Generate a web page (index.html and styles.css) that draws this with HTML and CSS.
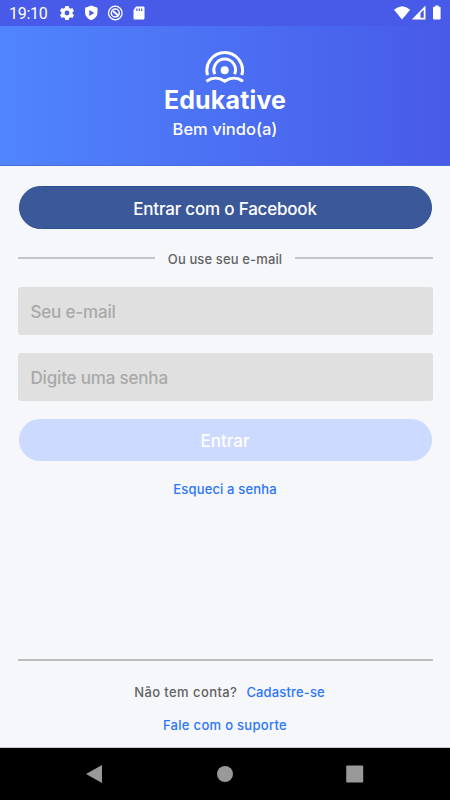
FILE: index.html
```html
<!DOCTYPE html>
<html lang="pt-BR">
<head>
<meta charset="utf-8">
<title>Edukative</title>
<link rel="stylesheet" href="styles.css">
</head>
<body>
<div class="screen">
  <div class="status">
    <span class="clock">19:10</span>
    <svg class="status-left" width="92" height="18" viewBox="0 0 92 18">
      <g fill="#fff">
        <path fill-rule="evenodd" d="M6.3 2h3.4l.5 2 1.2.7 2-.6 1.6 2.8-1.5 1.4v1.4l1.5 1.4-1.6 2.8-2-.6-1.2.7-.5 2H6.3l-.5-2-1.2-.7-2 .6L1 11.100l1.5-1.400V8.300L1 6.900l1.600-2.800 2 .6L5.800 4zM8 6.600a2.400 2.400 0 1 0 0 4.800 2.400 2.400 0 0 0 0-4.800z"/>
        <path fill-rule="evenodd" d="M32.300 1.500l6.200 2.300v4.700c0 3.400-2.300 6.300-6.200 7.700-3.900-1.400-6.200-4.300-6.200-7.700V3.800zM30.300 5.900v6l5-3z"/>
        <path fill-rule="evenodd" d="M79.500 2.500h7.300q1.200 0 1.200 1.200v10.600q0 1.200-1.200 1.200h-8.600q-1.200 0-1.200-1.200V6.300zM79.800 4.500v2.500h1.200V4.500zM82.200 4.500v2.500h1.200V4.500zM84.600 4.500v2.500h1.200V4.500z" transform="translate(-2.500 0)"/>
      </g>
      <g fill="none" stroke="#fff">
        <circle cx="56.300" cy="9" r="6.800" stroke-width="1.300"/>
        <circle cx="56.300" cy="9" r="4" stroke-width="1.500"/>
        <path d="M54 7l5.700 5" stroke-width="1.800"/>
      </g>
    </svg>
    <svg class="status-right" width="50" height="18" viewBox="0 0 50 18">
      <path fill="#fff" d="M0 5.800Q8 -1.200 16.200 5.800L8 15.400z"/>
      <path fill="#fff" fill-rule="evenodd" d="M31.500 1.600v13.800H17.800zM29.700 5.800l-3.200 3.300v4.700h3.200z"/>
      <path fill="#fff" d="M41.200 2.800V1.500h3.400v1.300h1.100q.9 0 .9.900v10.800q0 .900-.900.900h-5.800q-.900 0-.900-.900V3.700q0-.900.900-.9z"/>
    </svg>
  </div>
  <header class="hero">
    <svg class="logo" width="40" height="34" viewBox="0 0 40 34">
      <g fill="none" stroke="#fff" stroke-width="3">
        <path d="M2.600 25.200A17.800 17.800 0 1 1 36.800 25.200"/>
        <path d="M9.800 24.200A10.800 10.800 0 1 1 29.600 24.200"/>
        <path d="M1.400 31.200C7 27.300 14 27.300 19.700 31.200C25.400 27.300 32.400 27.300 38 31.200"/>
      </g>
      <circle cx="19.700" cy="20.200" r="4" fill="#fff"/>
    </svg>
    <h1 class="brand">Edukative</h1>
    <p class="welcome">Bem vindo(a)</p>
  </header>
  <main class="content">
    <button class="btn facebook"><span>Entrar com o Facebook</span></button>
    <div class="divider"><span class="divider-text">Ou use seu e-mail</span></div>
    <div class="field"><span class="ph-email">Seu e-mail</span></div>
    <div class="field"><span class="ph-pass">Digite uma senha</span></div>
    <button class="btn enter"><span>Entrar</span></button>
    <a class="link forgot">Esqueci a senha</a>
    <footer class="footer">
      <div class="signup"><span class="ask">Não tem conta?</span><a class="link register">Cadastre-se</a></div>
      <a class="link support">Fale com o suporte</a>
    </footer>
  </main>
  <nav class="nav">
    <svg width="18" height="20" viewBox="0 0 18 20"><path fill="#999" d="M0 10 16 .900V19.100z"/></svg>
    <svg width="18" height="20" viewBox="0 0 18 20"><circle cx="9" cy="10" r="8" fill="#999"/></svg>
    <svg width="18" height="20" viewBox="0 0 18 20"><rect x=".200" y="1.500" width="17" height="17" rx="1" fill="#999"/></svg>
  </nav>
</div>
</body>
</html>
```
FILE: styles.css
```css
* { box-sizing: border-box; margin: 0; padding: 0; }
body { font-family: Inter, "Liberation Sans", sans-serif; font-weight: 500; background: #f5f7fb; }
span, a, h1, p { white-space: nowrap; }
.screen { width: 450px; height: 800px; display: flex; flex-direction: column; overflow: hidden; }
.status { height: 26px; background: #475ae8; display: flex; align-items: center; padding: 0 6px 0 9px; color: #fff; }
.clock { font: 400 16px/26px Roboto, sans-serif; width: 50px; padding-top: 1px; letter-spacing: -.3px; }
.status-right { margin-left: auto; }
.hero { height: 140px; background: linear-gradient(90deg, #5085fe, #475ae8); color: #fff; display: flex; flex-direction: column; align-items: center; padding-top: 24px; border-bottom: 1px solid #4a6bd8; }
.logo { display: block; }
.brand { font-size: 25px; line-height: 32px; font-weight: 700; letter-spacing: .15px; }
.welcome { font-size: 16.500px; line-height: 26px; }
.content { flex: 1; display: flex; flex-direction: column; align-items: stretch; padding: 20px 17.500px 0; border-bottom: 1px solid #ccc; }
.btn { display: block; height: 43px; margin: 0 1px; border: 0; border-radius: 22px; color: #fff; font: 500 17px/43px Inter, sans-serif; }
.facebook { background: #3b5998; border: 1px solid #2f4f94; letter-spacing: -.2px; padding-top: 3px; line-height: 38px; }
.divider { display: flex; align-items: center; gap: 13px; height: 20px; margin: 20px 0 18px; color: #626262; font-size: 13px; letter-spacing: .13px; }
.divider::before, .divider::after { content: ""; flex: 1; height: 2px; margin-bottom: 2px; background: #c4c5c8; }
.field { height: 48px; margin-bottom: 18px; padding-left: 13px; background: #e0e0e0; border-radius: 3px; color: #a9a9a9; font-size: 17px; line-height: 50px; letter-spacing: -.18px; }
.enter { background: #ccdaff; height: 42px; padding-top: 2px; line-height: 40px; }
.link { color: #2b76f8; font-size: 13px; font-weight: 500; line-height: 20px; letter-spacing: .15px; }
.forgot { align-self: center; margin-top: 18px; }
.footer { margin-top: auto; height: 88px; border-top: 2px solid #bcbdbf; display: flex; flex-direction: column; align-items: center; padding-top: 21px; }
.signup { display: flex; gap: 9px; line-height: 20px; font-size: 13px; color: #626262; margin-left: 9px; }
.ask { letter-spacing: .42px; }
.support { margin-top: 13px; letter-spacing: .3px; }
.nav { height: 52px; background: #000; display: flex; align-items: center; justify-content: space-between; padding: 0 86px; }
```
